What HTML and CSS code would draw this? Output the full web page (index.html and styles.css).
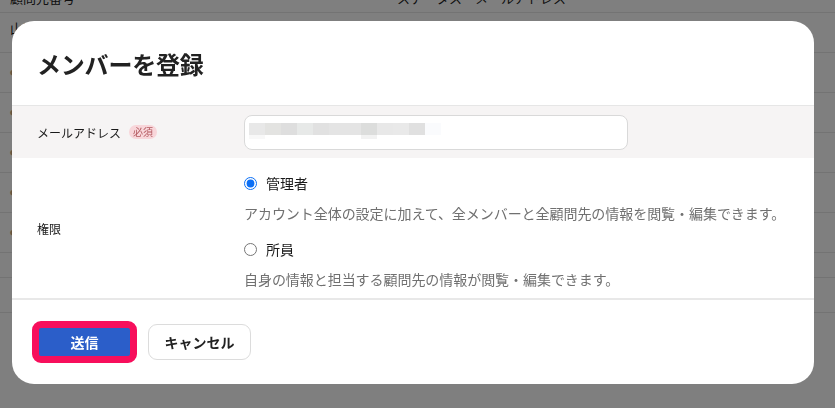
FILE: index.html
```html
<!DOCTYPE html>
<html lang="ja">
<head>
<meta charset="utf-8">
<title>メンバーを登録</title>
<link rel="stylesheet" href="styles.css">
</head>
<body>
<div class="page">
  <div class="bg-head">
    <span class="bg-h1">顧問先番号</span>
    <span class="bg-h2">ステータス・メールアドレス</span>
  </div>
  <div class="bg-row"><span class="bg-cell dark">山田</span></div>
  <div class="bg-row"><span class="bg-cell brown">●</span></div>
  <div class="bg-row"><span class="bg-cell brown">●</span></div>
  <div class="bg-row"><span class="bg-cell brown">●</span></div>
  <div class="bg-row"><span class="bg-cell brown">●</span></div>
  <div class="bg-row"><span class="bg-cell brown">●</span></div>
  <div class="bg-row short"></div>
  <div class="bg-row mid"></div>
</div>

<div class="overlay"></div>

<div class="modal" role="dialog">
  <div class="modal-header">
    <h1 class="modal-title">メンバーを登録</h1>
  </div>
  <div class="modal-body">
    <div class="form-row row-email">
      <div class="form-label">
        <span>メールアドレス</span>
        <span class="badge">必須</span>
      </div>
      <div class="form-field">
        <div class="text-input">
          <span class="blur-main"></span>
          <span class="blur-sub"></span>
        </div>
      </div>
    </div>
    <div class="form-row row-role">
      <div class="form-label">権限</div>
      <div class="form-field role-options">
        <label class="radio-line"><input type="radio" name="role" checked><span>管理者</span></label>
        <p class="radio-desc">アカウント全体の設定に加えて、全メンバーと全顧問先の情報を閲覧・編集できます。</p>
        <label class="radio-line"><input type="radio" name="role"><span>所員</span></label>
        <p class="radio-desc">自身の情報と担当する顧問先の情報が閲覧・編集できます。</p>
      </div>
    </div>
  </div>
  <div class="modal-footer">
    <button class="btn btn-primary" type="button">送信</button>
    <button class="btn btn-secondary" type="button">キャンセル</button>
  </div>
</div>
</body>
</html>
```

FILE: styles.css
```css
* { box-sizing: border-box; }

html, body {
  margin: 0;
  padding: 0;
  height: 100%;
}

body {
  font-family: "Noto Sans CJK JP", "Noto Sans", sans-serif;
  color: #1a1a1a;
  background: #ffffff;
  overflow: hidden;
}

/* background page */
.page {
  width: 100%;
}

.bg-head {
  height: 13px;
  border-bottom: 1px solid #e6e6e6;
  display: flex;
  overflow: hidden;
  font-size: 13px;
  line-height: 13px;
  color: #222;
}

.bg-h1 {
  margin-left: 10px;
  margin-top: -9px;
}

.bg-h2 {
  margin-left: 322px;
  margin-top: -9px;
}

.bg-row {
  height: 40px;
  border-bottom: 1px solid #e6e6e6;
  display: flex;
  align-items: center;
  font-size: 13px;
}

.bg-row.short { height: 25px; }
.bg-row.mid { height: 35px; }

.bg-cell { margin-left: 10px; }
.bg-cell.dark { color: #222; margin-top: -10px; }
.bg-cell.brown { color: #c9a77e; font-size: 6px; margin-left: 10px; }

.overlay {
  position: fixed;
  inset: 0;
  background: rgba(0, 0, 0, 0.5);
}

/* modal */
.modal {
  position: absolute;
  left: 12px;
  top: 21px;
  width: 802px;
  height: 363px;
  background: #fff;
  border-radius: 22px;
  overflow: hidden;
  display: flex;
  flex-direction: column;
}

.modal-header {
  height: 85px;
  padding-left: 25px;
  display: flex;
  align-items: center;
  border-bottom: 1px solid #e6e6e6;
}

.modal-title {
  margin: 0;
  font-size: 24px;
  font-weight: 700;
  color: #222;
  letter-spacing: -0.2px;
}

.modal-body {
  display: flex;
  flex-direction: column;
}

.form-row {
  display: grid;
  grid-template-columns: 232px 1fr;
}

.row-email {
  height: 52px;
  background: #f6f4f4;
  align-items: center;
}

.form-label {
  padding-left: 25px;
  font-size: 12px;
  display: flex;
  align-items: center;
  gap: 8px;
  color: #1a1a1a;
}

.badge {
  display: inline-block;
  background: #f8d6da;
  color: #b35a60;
  font-size: 10px;
  line-height: 14px;
  padding: 0 4px;
  border-radius: 7px;
}

.text-input {
  width: 384px;
  height: 35px;
  background: #fff;
  border: 1px solid #d9d9d9;
  border-radius: 8px;
  position: relative;
  padding: 7px 0 0 4px;
}

.blur-main {
  display: block;
  width: 192px;
  height: 12px;
  background: linear-gradient(to right,
    #e8e8e8 0 16px, #e3e3e1 16px 32px, #dedede 32px 48px, #e7e9e8 48px 64px,
    #e1e1e1 64px 80px, #e4e4e4 80px 112px, #dcdddc 112px 128px,
    #e8e8e8 128px 144px, #e9e9e9 144px 160px, #e0e0e0 160px 176px,
    #fafbfd 176px 192px);
}

.blur-sub {
  display: block;
  width: 128px;
  height: 4px;
  background: linear-gradient(to right,
    #f8f8f8 0 16px, #ffffff 16px 112px, #f2f2f2 112px 128px);
}

.row-role {
  height: 140px;
  background: #fff;
  align-items: center;
}

.role-options {
  padding-top: 15px;
  align-self: start;
  display: flex;
  flex-direction: column;
}

.radio-line {
  display: flex;
  align-items: center;
  height: 20px;
  font-size: 14px;
  color: #1a1a1a;
}

.radio-line input {
  margin: 0 9px 0 0;
  width: 13px;
  height: 13px;
  accent-color: #0b6ff5;
}

.radio-desc {
  margin: 10px 0 16px 0;
  font-size: 14px;
  line-height: 20px;
  color: #707070;
  letter-spacing: -0.05px;
}

.radio-desc:last-child {
  margin-bottom: 0;
}

.modal-footer {
  flex: 1;
  border-top: 2px solid #e8e8e8;
  display: flex;
  align-items: center;
  padding-left: 20px;
  gap: 11px;
}

.btn {
  font-family: inherit;
  font-size: 14px;
  font-weight: 700;
  cursor: pointer;
}

.btn-primary {
  width: 105px;
  height: 42px;
  border: 7px solid #f70f5c;
  border-radius: 9px;
  background: #2b5ec9;
  color: #fff;
  padding: 0;
}

.btn-secondary {
  width: 103px;
  height: 36px;
  border: 1px solid #dcdcdc;
  border-radius: 9px;
  background: #fff;
  color: #222;
  padding: 0;
}
```
